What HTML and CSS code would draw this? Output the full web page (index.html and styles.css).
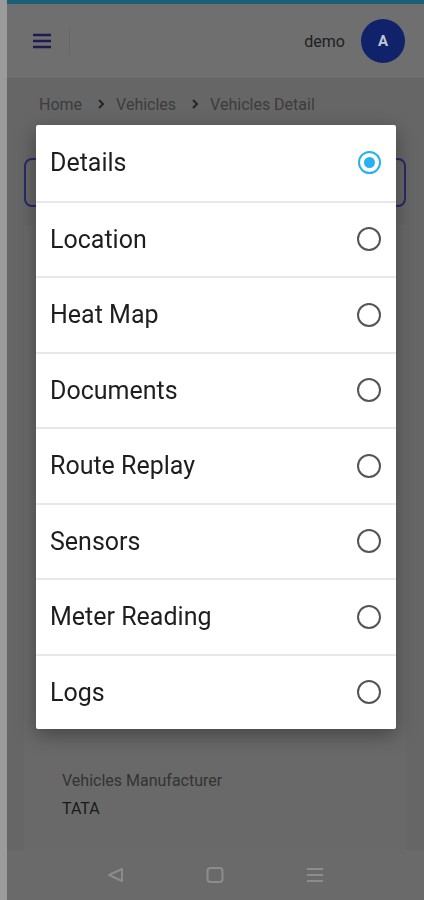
FILE: index.html
```html
<!DOCTYPE html>
<html lang="en">
<head>
  <meta charset="UTF-8">
  <title>Vehicles Detail</title>
  <link rel="stylesheet" href="styles.css">
</head>
<body>
  <div class="phone">
    <div class="edge"></div>
    <div class="app">
      <div class="statusbar"></div>

      <header class="header">
        <button class="menu-btn" aria-label="Menu">
          <svg width="18" height="16" viewBox="0 0 18 16">
            <path d="M0 2h18M0 8h18M0 14h18" stroke="currentColor" stroke-width="2.6" />
          </svg>
        </button>
        <span class="header-divider"></span>
        <span class="user-name">demo</span>
        <span class="avatar">A</span>
      </header>

      <main class="content">
        <nav class="breadcrumb">
          <span>Home</span>
          <svg class="chevron" width="6" height="10" viewBox="0 0 6 10">
            <path d="M1 1l4 4-4 4" fill="none" stroke="currentColor" stroke-width="2" />
          </svg>
          <span>Vehicles</span>
          <svg class="chevron" width="6" height="10" viewBox="0 0 6 10">
            <path d="M1 1l4 4-4 4" fill="none" stroke="currentColor" stroke-width="2" />
          </svg>
          <span>Vehicles Detail</span>
        </nav>

        <div class="tab-select"></div>

        <section class="card">
          <div class="field">
            <div class="field-label">Vehicles Manufacturer</div>
            <div class="field-value">TATA</div>
          </div>
        </section>
      </main>

      <footer class="navbar">
        <svg width="18" height="16" viewBox="0 0 18 16">
          <path d="M16 2L3 8l13 6z" fill="none" stroke="currentColor" stroke-width="2" stroke-linejoin="round" />
        </svg>
        <svg width="18" height="16" viewBox="0 0 18 16">
          <rect x="1.5" y="1" width="15" height="14" rx="3" fill="none" stroke="currentColor" stroke-width="2" />
        </svg>
        <svg width="18" height="16" viewBox="0 0 18 16">
          <path d="M1 2h16M1 8h16M1 14h16" stroke="currentColor" stroke-width="2" />
        </svg>
      </footer>
    </div>
  </div>

  <div class="dialog" id="tab-dialog"></div>

  <script>
    const tabs = ['Details', 'Location', 'Heat Map', 'Documents', 'Route Replay', 'Sensors', 'Meter Reading', 'Logs'];
    let selected = 'Details';

    function renderTabs() {
      const dialog = document.getElementById('tab-dialog');
      dialog.innerHTML = '';

      tabs.forEach(name => {
        const row = document.createElement('label');
        row.className = 'option';

        const text = document.createElement('span');
        text.className = 'option-text';
        text.textContent = name;

        const radio = document.createElement('span');
        radio.className = 'radio';
        if (name === selected) radio.classList.add('checked');

        row.appendChild(text);
        row.appendChild(radio);
        row.addEventListener('click', () => {
          selected = name;
          renderTabs();
        });
        dialog.appendChild(row);
      });
    }

    renderTabs();
  </script>
</body>
</html>
```

FILE: styles.css
```css
:root {
  --dim-bg: #666666;
  --dim-header: #6f6f6f;
  --dim-card: #696969;
  --dim-navy: #10236a;
  --accent: #29b0f0;
  --text: #1e1e1e;
}

body {
  margin: 0;
  font-family: Roboto, "Noto Sans", Arial, sans-serif;
  background-color: var(--dim-bg);
}

.phone {
  display: flex;
  height: 900px;
  overflow: hidden;
}

.edge {
  width: 7px;
  background-color: #9b9b9b;
}

.app {
  flex: 1;
  display: flex;
  flex-direction: column;
}

.statusbar {
  height: 4px;
  background-color: #1a5f75;
}

.header {
  height: 74px;
  display: flex;
  align-items: center;
  padding: 0 19px 0 26px;
  background-color: var(--dim-header);
  border-bottom: 1px solid #636363;
}

.menu-btn {
  background: none;
  border: none;
  padding: 0;
  color: #1c1c50;
  display: flex;
}

.header-divider {
  width: 1px;
  height: 28px;
  margin-left: 18px;
  background-color: #676767;
}

.user-name {
  margin-left: auto;
  font-size: 16px;
  color: #202020;
}

.avatar {
  width: 44px;
  height: 44px;
  margin-left: 16px;
  border-radius: 50%;
  background-color: var(--dim-navy);
  color: #c4c6d0;
  font-size: 15px;
  font-weight: bold;
  display: flex;
  align-items: center;
  justify-content: center;
}

.content {
  flex: 1;
  display: flex;
  flex-direction: column;
  padding: 0 18px 0 17px;
}

.breadcrumb {
  display: flex;
  align-items: center;
  height: 20px;
  margin: 15px 0 0 15px;
  font-size: 16px;
  color: #3c3c3c;
}

.chevron {
  color: #262626;
  margin: 0 12px 0 16px;
}

.tab-select {
  height: 45px;
  margin-top: 44px;
  border: 2px solid #29296a;
  border-radius: 8px;
}

.card {
  flex: 1;
  margin-top: 18px;
  display: flex;
  flex-direction: column;
  justify-content: flex-end;
  padding: 0 20px 31px 38px;
  background-color: var(--dim-card);
}

.field-label {
  font-size: 16px;
  line-height: 20px;
  color: #333;
}

.field-value {
  margin-top: 8px;
  font-size: 16px;
  line-height: 20px;
  color: #1a1a1a;
}

.navbar {
  height: 50px;
  display: flex;
  align-items: center;
  justify-content: center;
  gap: 82px;
  padding-right: 2px;
  background-color: #6a6a6a;
  color: #8c8c8c;
}

.dialog {
  position: fixed;
  top: 125px;
  left: 36px;
  width: 360px;
  height: 604px;
  display: grid;
  grid-template-rows: repeat(8, 1fr);
  background-color: #fff;
  border-radius: 2px;
  box-shadow: 0 6px 20px rgba(0, 0, 0, 0.35);
}

.option {
  display: flex;
  align-items: center;
  justify-content: space-between;
  padding: 0 15px 0 14px;
  border-top: 2px solid #e8e8e8;
  cursor: pointer;
}

.option:first-child {
  border-top: none;
}

.option-text {
  font-size: 25px;
  color: var(--text);
}

.radio {
  width: 20px;
  height: 20px;
  border: 2px solid #555;
  border-radius: 50%;
  display: flex;
  align-items: center;
  justify-content: center;
}

.radio.checked {
  border-color: var(--accent);
  border-width: 2.5px;
  width: 19px;
  height: 19px;
}

.radio.checked::after {
  content: "";
  width: 11px;
  height: 11px;
  border-radius: 50%;
  background-color: var(--accent);
}
```
